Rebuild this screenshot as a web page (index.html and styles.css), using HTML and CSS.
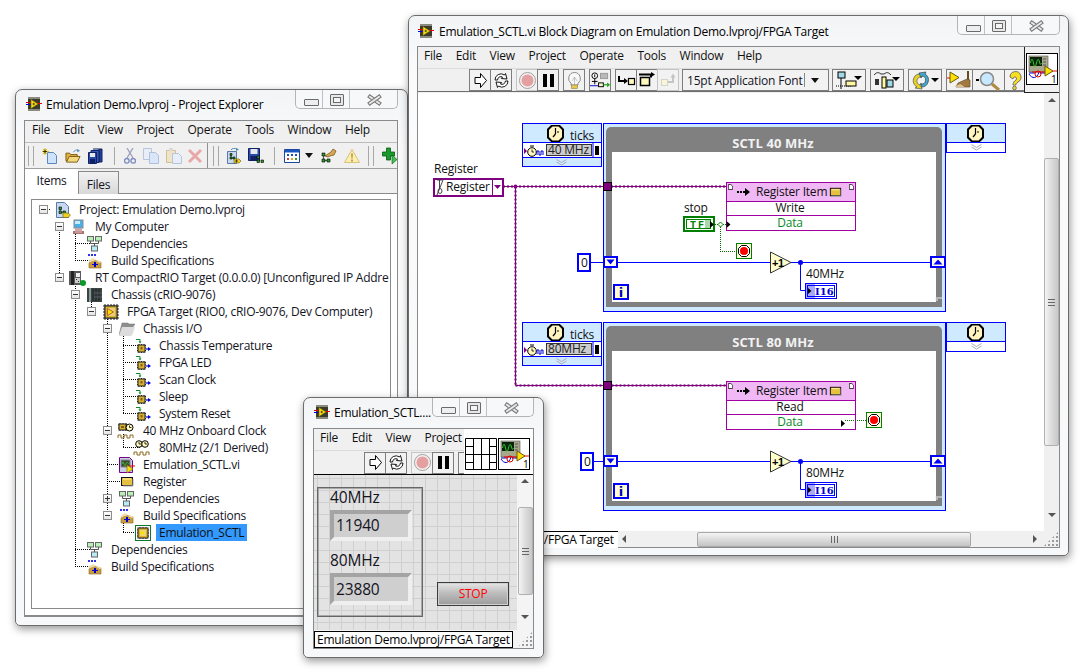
FILE: index.html
```html
<!DOCTYPE html>
<html lang="en">
<head>
<meta charset="utf-8">
<title>Emulation Demo</title>
<link rel="stylesheet" href="styles.css">
</head>
<body>
<svg class="defs" aria-hidden="true">
  <symbol id="vi" viewBox="0 0 16 16">
    <rect x="2" y="1" width="12" height="14" fill="#3b3b2c"/>
    <path d="M2 1h12v2H2zM2 13h12v2H2z" fill="#8a8a80"/>
    <path d="M0 6.500h5" stroke="#d00" fill="none"/><path d="M0 8.500h5" stroke="#00d" fill="none"/>
    <path d="M11 7.500h5" stroke="#e00" fill="none"/>
    <path d="M5 3.500l7 4.500-7 4.500z" fill="#ffe000" stroke="#6a6a20" stroke-width=".6"/>
    <path d="M6.500 8h2.500M7.700 6.800v2.400" stroke="#333" stroke-width=".8"/>
  </symbol>
  <symbol id="viicon" viewBox="0 0 32 32">
    <rect x=".5" y=".5" width="31" height="31" fill="#fff" stroke="#000"/>
    <rect x="3" y="3" width="19" height="16" fill="#a8a88c" stroke="#555" stroke-width=".6"/>
    <rect x="4" y="4" width="12" height="9" fill="#0a220a"/>
    <path d="M4.500 10c1-5 2-5 3 0s2 4 3 0 2-5 3-1 1 2 2 1" stroke="#3c3" fill="none"/>
    <path d="M17 6h3M17 9h3M17 12h3" stroke="#555"/>
    <path d="M3 20h6M14 20h8" stroke="#00c" fill="none"/>
    <path d="M3 21c3 5 8 5 10-2" stroke="#00c" fill="none"/>
    <circle cx="12" cy="21" r="3" fill="none" stroke="#d00"/>
    <path d="M6 19h16M26 18h5" stroke="#e00"/>
    <path d="M19 13l8 5-8 5z" fill="#ffe000" stroke="#665a10"/>
  </symbol>
  <symbol id="conn" viewBox="0 0 32 32">
    <path d="M.5.500h31v31H.5zM8.500 0v32M16.500 0v32M24.500 0v32M0 8.500h8M0 16.500h8M0 24.500h8M24 8.500h8M24 16.500h8M24 24.500h8M8 16.500h16" fill="#fff" stroke="#000"/>
  </symbol>
  <symbol id="run" viewBox="0 0 19 19"><path d="M4 6.500h5.500V2.500l6 7-6 7v-4H4z" fill="#fff" stroke="#000"/></symbol>
  <symbol id="runc" viewBox="0 0 19 19"><path d="M3 9a6 6 0 0 1 9.500-5l1-1.500 1.500 5.500-5.500-.5 1-1.500a3.500 3.500 0 0 0-5 3z" fill="#fff" stroke="#000" stroke-width=".9"/><path d="M16 10a6 6 0 0 1-9.500 5l-1 1.500-1.500-5.500 5.500.5-1 1.500a3.500 3.500 0 0 0 5-3z" fill="#fff" stroke="#000" stroke-width=".9"/></symbol>
  <symbol id="abort" viewBox="0 0 19 19"><circle cx="9.500" cy="9.500" r="8" fill="#f6f0f0" stroke="#a0a0a0"/><circle cx="9.500" cy="9.500" r="6" fill="#e4a0a0"/></symbol>
  <symbol id="pause" viewBox="0 0 19 19"><path d="M4 3h4v13H4zM11 3h4v13h-4z" fill="#000"/></symbol>
  <symbol id="bulb" viewBox="0 0 19 19"><path d="M9.500 1.500a6 6 0 0 1 3.500 10.800v1.700H6v-1.700A6 6 0 0 1 9.500 1.500z" fill="#f8f8f8" stroke="#8a8a8a"/><path d="M7 10l2.500-4 2.500 4M9.500 6v8" fill="none" stroke="#b0b0b0" stroke-width=".7"/><rect x="6.500" y="14" width="6" height="3.500" fill="#e8c850" stroke="#8a8040" stroke-width=".6"/></symbol>
  <symbol id="retain" viewBox="0 0 21 19"><circle cx="5" cy="4.500" r="3" fill="#fff" stroke="#000"/><path d="M5 3v3M5 7.500v6M2 10.500h6" stroke="#000" fill="none"/><rect x="11" y="2" width="7.500" height="5.500" fill="#b8b8b8" stroke="#999"/><rect x="9" y="12" width="5" height="4" fill="#fff8c0" stroke="#000"/><path d="M0 15h9" stroke="#00c"/><path d="M14 14h4" stroke="#080"/><path d="M18 11.500l3 2.500-3 2.500z" fill="#0a0"/></symbol>
  <symbol id="stepin" viewBox="0 0 19 19"><path d="M2 5v5h6" fill="none" stroke="#000" stroke-width="2"/><path d="M7 7l4 3-4 3z" fill="#000"/><rect x="11.500" y="7.500" width="6" height="6" fill="#fff8c0" stroke="#000" stroke-width="1.200"/></symbol>
  <symbol id="stepover" viewBox="0 0 19 19"><rect x="2.500" y="6.500" width="9" height="8" fill="#fff8c0" stroke="#000" stroke-width="1.500"/><path d="M1 3.500h12v3" fill="none" stroke="#000" stroke-width="2"/><path d="M13 1l4 2.500-4 2.500z" fill="#000"/></symbol>
  <symbol id="stepout" viewBox="0 0 19 19" opacity=".5"><rect x="2.500" y="8.500" width="6" height="6" fill="#fff8c0" stroke="#b8b8a0"/><path d="M9 11h5V6" fill="none" stroke="#999" stroke-width="2"/><path d="M11.500 6.500l2.500-4 2.500 4z" fill="#999"/></symbol>
  <symbol id="align" viewBox="0 0 28 21"><rect x="3" y="2" width="7" height="6" fill="#a0d8e8" stroke="#000"/><path d="M1 16h15" stroke="#000" stroke-dasharray="1 1"/><path d="M6 8v11" stroke="#000"/><rect x="11" y="11" width="10" height="5" fill="#fff8a0" stroke="#000"/><path d="M22 6h8l-4 4z" transform="translate(-3 0)" fill="#000"/></symbol>
  <symbol id="dist" viewBox="0 0 28 21"><path d="M1 5c3-3 4-3 7-1h3c3-2 4-2 7 1" fill="none" stroke="#000" stroke-width=".8"/><rect x="2" y="9" width="4" height="6" fill="#333"/><rect x="9" y="7" width="4" height="11" fill="#fff8a0" stroke="#000"/><rect x="14" y="10" width="6" height="7" fill="#a0d8e8" stroke="#000"/><path d="M20 7h8l-4 4z" fill="#000" transform="translate(-1 0)"/></symbol>
  <symbol id="reorder" viewBox="0 0 28 21"><path d="M11 4A7 7 0 0 0 6 17l-2 1 7 1-1-6-1 2a4 4 0 0 1 2-8z" fill="#e8d020" stroke="#555" stroke-width=".7"/><path d="M10 17a7 7 0 0 0 4-13l1-2-7 1 2 5 1-2a4 4 0 0 1-1 8z" fill="#40a8c8" stroke="#345" stroke-width=".7"/><path d="M21 8h8l-4 4z" fill="#000" transform="translate(-1 0)"/></symbol>
  <symbol id="clean" viewBox="0 0 25 21"><path d="M0 8h6" stroke="#e00"/><path d="M3 2l9 5.500-9 5.500z" fill="#ffe000" stroke="#665a10"/><path d="M21 1v9" stroke="#6a4a20" stroke-width="2"/><path d="M11 13l9-4 3 1v7H9z" fill="#a07840" stroke="#5a4020" stroke-width=".6"/><path d="M7 17l6-3 5 3z" fill="#e0c090"/></symbol>
  <symbol id="find" viewBox="0 0 31 21"><path d="M3 10h3" stroke="#000" stroke-width="2"/><circle cx="14" cy="9" r="6.500" fill="#c8e8ff" stroke="#888" stroke-width="1.500"/><path d="M19 14l7 6" stroke="#b08a40" stroke-width="3"/></symbol>
  <symbol id="help" viewBox="0 0 21 21"><path d="M5 7a5.500 5.500 0 1 1 8 5c-2 1-2 2-2 3H8c0-2 1-4 3-5 1.200-1 .5-3-1-3-1 0-2 .5-2 2z" fill="#f8e020" stroke="#555" stroke-width=".8"/><circle cx="9.500" cy="18" r="1.800" fill="#f8e020" stroke="#555" stroke-width=".8"/></symbol>

  <symbol id="new" viewBox="0 0 16 16"><path d="M5.500 4.500h6l3 3v8h-9z" fill="#cfe4fa" stroke="#5a88c0"/><path d="M3 0v7M0 3.500h7M1 1l4 5M5 1L1 6" stroke="#e0c000"/><path d="M3 1.500v4M1 3.500h4" stroke="#000" stroke-width=".7"/></symbol>
  <symbol id="open" viewBox="0 0 17 16"><path d="M1 13V5h4l1 1.500h7V13z" fill="#e0b040" stroke="#7a5a10"/><path d="M1.500 14.500l3-6h11.500l-3 6z" fill="#f4d880" stroke="#7a5a10"/><path d="M9 4c1-2 3-3 5-2" stroke="#4a8ac0" fill="none"/><path d="M13 .5l3 2-3 1.500z" fill="#4a8ac0"/></symbol>
  <symbol id="saveall" viewBox="0 0 16 16"><path d="M5 1h9v13h-3V1" fill="#2040a0" stroke="#102060"/><path d="M3 2.500h8v12H3z" fill="#3a58b8" stroke="#102060"/><path d="M.5 4.500h8v11h-8z" fill="#2a48a8" stroke="#102060"/><rect x="2" y="5" width="5" height="4" fill="#e8e8f0"/><rect x="2" y="11" width="5" height="4" fill="#102060"/></symbol>
  <symbol id="cut" viewBox="0 0 12 16"><path d="M3 0l6 10M9 0L3 10" stroke="#a0a0c0" stroke-width="1.400"/><circle cx="2.800" cy="12.800" r="2.300" fill="none" stroke="#8090c0" stroke-width="1.400"/><circle cx="9.200" cy="12.800" r="2.300" fill="none" stroke="#8090c0" stroke-width="1.400"/></symbol>
  <symbol id="copy" viewBox="0 0 16 16"><path d="M.5.500h8v11h-8z" fill="#e8eef8" stroke="#b8c4dc"/><path d="M6.500 4.500h6l3 3v8h-9z" fill="#d8e6f8" stroke="#b0c0dc"/></symbol>
  <symbol id="paste" viewBox="0 0 16 16"><path d="M.5 2.500h9v12h-9z" fill="#f0e4c8" stroke="#d0c098"/><rect x="3" y="0" width="4" height="3" fill="#d8d8d8"/><path d="M6.500 5.500h6l3 3v7h-9z" fill="#e8eef8" stroke="#b8c4dc"/></symbol>
  <symbol id="del" viewBox="0 0 14 14"><path d="M1 1l12 12M13 1L1 13" stroke="#e8a8a8" stroke-width="3"/></symbol>
  <symbol id="projadd" viewBox="0 0 16 16"><path d="M2.500 3.500h9v12h-9z" fill="#c8d8f0" stroke="#5a78a8"/><path d="M5 5.500h2v2H5zM5 9h2v2H5zM8 9h2v2H8z" fill="#2a9a2a" stroke="#000" stroke-width=".6"/><path d="M6 7.500V9M7 10h1" stroke="#000" stroke-width=".6"/><path d="M6 2c1-2 4-2 6-1" stroke="#4a8ac0" fill="none"/><path d="M11 0l3 1.500-3 1.500z" fill="#4a8ac0"/><path d="M9 11h5l2 2-2 2H9z" fill="#f0d020" stroke="#665a10" stroke-width=".6"/><path d="M10 13h3M11.500 11.500v3" stroke="#000" stroke-width=".6"/></symbol>
  <symbol id="projsave" viewBox="0 0 16 16"><path d="M.5.500h11v12h-11z" fill="#2a48a8" stroke="#102060"/><rect x="2.500" y="1" width="7" height="5" fill="#e8e8f0"/><rect x="2.500" y="8" width="7" height="4" fill="#102060"/><path d="M9 8h2.500v2.500H9zM9 12h2.500v2.500H9zM13 12h2.500v2.500H13z" fill="#2a9a2a" stroke="#000" stroke-width=".6"/></symbol>
  <symbol id="cal" viewBox="0 0 16 16"><path d="M.5 1.500h15v13H.5z" fill="#fff" stroke="#1a48a0"/><rect x="1" y="2" width="14" height="2.500" fill="#1a58c0"/><path d="M3 6h2v2H3zM7 6h2v2H7zM11 6h2v2h-2z" fill="#2050c0"/><path d="M3 10h2v2H3z" fill="#c04040"/><path d="M7 10h2v2H7z" fill="#e0a020"/><path d="M11 10h2v2h-2z" fill="#30a030"/></symbol>
  <symbol id="tool" viewBox="0 0 17 16"><path d="M2 5h3v3H2zM2 11h3v3H2zM7 11h3v3H7z" fill="#2a9a2a" stroke="#000" stroke-width=".6"/><path d="M3.500 8v3M5 12.500h2" stroke="#000" stroke-width=".6"/><path d="M5 8l6-4 2-3 3 2-2 4-4 1-2 1z" fill="#d8a850" stroke="#6a4a10" stroke-width=".7"/></symbol>
  <symbol id="warn" viewBox="0 0 16 15"><path d="M8 1l7.500 13H.5z" fill="#fbeeb0" stroke="#d8c078"/><path d="M7 5h2l-.4 5H7.400zM7 11h2v2H7z" fill="#c0a040"/></symbol>
  <symbol id="plus" viewBox="0 0 16 18"><path d="M4.500 1h4v4h4v4h-4v4h-4V9h-4V5h4z" fill="#1a9a2a" stroke="#0a5a14" stroke-width=".8"/><path d="M10 8l5 4.500-5 4.500z" fill="#40c050" stroke="#0a5a14" stroke-width=".6"/></symbol>

  <symbol id="t-proj" viewBox="0 0 16 16"><path d="M1.500.500h8l4 4v11h-12z" fill="#c8d8f0" stroke="#5a78a8"/><path d="M4 5h2.500v2.500H4zM4 9h2.500v2.500H4zM8 9h2.500v2.500H8z" fill="#2a9a2a" stroke="#000" stroke-width=".6"/><path d="M5.200 7.500V9M6.500 10.200H8" stroke="#000" stroke-width=".6"/><path d="M8 11h5l2.500 2.200-2.500 2.300H8z" fill="#f0d020" stroke="#665a10" stroke-width=".6"/></symbol>
  <symbol id="t-pc" viewBox="0 0 16 16"><rect x="3" y="1" width="9" height="8" fill="#48b0e8" stroke="#8a8a8a"/><rect x="4" y="2" width="5" height="3" fill="#c8ecff"/><path d="M4 9h7v3H4z" fill="#c8a8a8"/><path d="M2 12h11v3H2z" fill="#b07070"/><path d="M4 13h7" stroke="#fff" stroke-width=".6"/></symbol>
  <symbol id="t-dep" viewBox="0 0 16 16"><rect x=".5" y=".5" width="6" height="4.500" fill="#b8f0b8" stroke="#666"/><rect x="8.500" y=".5" width="6" height="4.500" fill="#b8f0b8" stroke="#666"/><path d="M3.500 5v2.500h8V5M7.500 7.500V10" stroke="#555" fill="none"/><rect x="4.500" y="10" width="6" height="5" fill="#b8ecf8" stroke="#666"/></symbol>
  <symbol id="t-build" viewBox="0 0 16 16"><circle cx="2" cy="2" r="1.100" fill="#00d"/><circle cx="5" cy="2" r="1.100" fill="#00d"/><circle cx="8" cy="2" r="1.100" fill="#00d"/><path d="M2 10l5-3 7 2v6H2z" fill="#cc9c40" stroke="#8a6820" stroke-width=".6"/><path d="M1 8l5-3 3 2-6 2zM10 7l5 2-2 1-4-2z" fill="#f0e0b0"/><path d="M7 9h2v2h2v1H9v2H7v-2H5v-1h2z" fill="#00c"/></symbol>
  <symbol id="t-rt" viewBox="0 0 18 16"><rect x="0" y="1" width="12" height="14" fill="#5a5a5a"/><rect x="2" y="1" width="3" height="14" fill="#222"/><rect x="7" y="3" width="4" height="4" fill="#eee"/><rect x="6" y="8" width="5" height="5" fill="#ccc"/><path d="M7 9h1v1H7zM9 11h1v1H9z" fill="#333"/><circle cx="14" cy="13" r="3" fill="#0a9a2a"/></symbol>
  <symbol id="t-chassis" viewBox="0 0 16 16"><rect x="0" y="1" width="15" height="14" fill="#3c4444"/><path d="M3 1v14" stroke="#8a9a9a" stroke-width="2"/><path d="M6 2v12M9 2v12M12 2v12" stroke="#1a2020"/><path d="M7 6h8M7 10h8" stroke="#667" stroke-width=".8"/></symbol>
  <symbol id="t-fpga" viewBox="0 0 16 16"><path d="M2 0v16M5 0v16M8 0v16M11 0v16M14 0v16M0 2h16M0 5h16M0 8h16M0 11h16M0 14h16" stroke="#222" stroke-width="1"/><rect x="2" y="2" width="12" height="12" fill="#d8b030" stroke="#222"/><rect x="4" y="4" width="8" height="8" fill="#e8d080"/><path d="M4.500 4.500l6 3.500-6 3.500z" fill="#ffe000" stroke="#a03020" stroke-width=".7"/></symbol>
  <symbol id="t-folder" viewBox="0 0 16 16"><path d="M0 14L3 2h6l1 1h6l-2 3-2 8z" fill="#8e8e8e" stroke="#777" stroke-width=".5"/><path d="M0 14.500l3-8.500h13l-3 8.500z" fill="#dcdcdc"/></symbol>
  <symbol id="t-io" viewBox="0 0 16 16"><path d="M1 1.500h4V4" fill="none" stroke="#0a8a2a"/><path d="M3.500 3.500h3L5 5.500z" fill="#0a8a2a"/><path d="M4 6v9M6.500 6v9M9 6v9M2 7.500h9M2 10h9M2 12.500h9" stroke="#222"/><rect x="3" y="7" width="7" height="7" fill="#d8b030" stroke="#222"/><rect x="5.500" y="9" width="2" height="2.500" fill="#806020"/><path d="M11 11h3" stroke="#00d" stroke-width="1.200"/><path d="M13 9l3 2-3 2z" fill="#00d"/></symbol>
  <symbol id="t-clock" viewBox="0 0 18 16"><path d="M3 0v8M6 0v8M9 0v8M1 2h9M1 5h9" stroke="#222"/><rect x="2" y="1" width="7" height="6" fill="#d8b030" stroke="#222"/><rect x="4" y="3" width="3" height="2" fill="#806020"/><circle cx="12.500" cy="4.500" r="3.500" fill="#fff8c0" stroke="#000"/><path d="M12.500 2.500v2h2" stroke="#000" fill="none" stroke-width=".8"/><path d="M1 15v-3h3v3h3v-3h3v3h3v-3h3v3" stroke="#8a6a20" fill="none"/></symbol>
  <symbol id="t-derived" viewBox="0 0 18 16"><circle cx="6" cy="4" r="3.300" fill="#fff8c0" stroke="#000"/><circle cx="12" cy="4" r="3.300" fill="#fff8c0" stroke="#000"/><path d="M6 2v2h2M12 2v2h2" stroke="#000" fill="none" stroke-width=".8"/><path d="M1 15v-3h3v3h3v-3h3v3h3v-3h3v3" stroke="#8a6a20" fill="none"/></symbol>
  <symbol id="t-vi" viewBox="0 0 16 16"><path d="M.5.500h10l3 3v12H.5z" fill="#c8d0e8" stroke="#708"/><rect x="2" y="3" width="9" height="7" fill="#3c4a30" stroke="#889"/><path d="M3 7c1-3 1-3 2 0s2 2 2 0 2-2 3 0" stroke="#4c4" fill="none" stroke-width=".8"/><path d="M10 9h6" stroke="#e00"/><path d="M8 8l6 4-6 4z" fill="#ffe000" stroke="#665a10" stroke-width=".6"/></symbol>
  <symbol id="t-reg" viewBox="0 0 16 16"><rect x="2.500" y="3.500" width="11" height="8" fill="#e8c040" stroke="#111"/><path d="M4 5h8" stroke="#fff4a0"/><path d="M14 5v7H4" stroke="#aaa" fill="none"/></symbol>
  <symbol id="t-bit" viewBox="0 0 16 16"><rect x=".5" y=".5" width="15" height="15" fill="#fff" stroke="#0a7a2a"/><path d="M5 2v12M8 2v12M11 2v12M2 5h12M2 8h12M2 11h12" stroke="#222"/><rect x="3" y="3" width="10" height="10" fill="#d8b030" stroke="#222"/><rect x="5" y="5" width="6" height="6" fill="#e8d880"/><path d="M5.500 5.500l5 2.500-5 2.500z" fill="#ffe000"/></symbol>

  <symbol id="clk" viewBox="0 0 17 17"><path d="M5 .5h7l4 4v8l-4 4H5l-4-4v-8z" fill="#fff4c0" stroke="#000" stroke-width="2"/><path d="M8.500 3v6M8.500 9L6 12" stroke="#000" stroke-width="1.200"/><path d="M11 6v2" stroke="#000"/></symbol>
  <symbol id="clkwave" viewBox="0 0 20 12"><path d="M0 3l3 3-3 3z" fill="#800080"/><circle cx="8" cy="7" r="4.300" fill="#fff8c0" stroke="#000"/><path d="M6 1h4" stroke="#000"/><path d="M8 4.500V7h2" stroke="#000" fill="none" stroke-width=".8"/><path d="M13 10V6h2v4h2V6h2v4" stroke="#00c" fill="none"/></symbol>
  <symbol id="chev" viewBox="0 0 11 7"><path d="M.5 .5l5 3 5-3M.5 3l5 3 5-3" stroke="#aab" fill="none"/></symbol>
  <symbol id="doc" viewBox="0 0 7 8"><path d="M.5.500h3.500l2.500 2.500v4.500h-6z" fill="#fff" stroke="#000"/></symbol>
  <symbol id="regarrow" viewBox="0 0 13 11"><path d="M0 4h2v2H0zM3 4h2v2H3z" fill="#000"/><path d="M6 4h2V1l5 4-5 4V6H6z" fill="#000"/></symbol>
  <symbol id="stopt" viewBox="0 0 16 16"><rect x=".5" y=".5" width="15" height="15" fill="#fff8d8" stroke="#008000"/><path d="M5.500 2.500h5l3 3v5l-3 3h-5l-3-3v-5z" fill="#fff" stroke="#000"/><circle cx="8" cy="8" r="4" fill="#f00"/></symbol>
</svg>

<section class="win win-proj">
  <header class="titlebar"><svg class="ic16"><use href="#vi"/></svg><span class="titletext">Emulation Demo.lvproj - Project Explorer</span></header>
  <div class="caps cap-proj"><i class="cap cap-min"></i><i class="cap cap-max"></i><i class="cap cap-close"></i></div>
  <div class="client">
    <nav class="menubar menu-proj"><span>File</span><span>Edit</span><span>View</span><span>Project</span><span>Operate</span><span>Tools</span><span>Window</span><span>Help</span></nav>
    <div class="ptools">
      <i class="grip"></i>
      <svg class="pt pt-new"><use href="#new"/></svg>
      <svg class="pt pt-o"><use href="#open"/></svg>
      <svg class="pt"><use href="#saveall"/></svg>
      <i class="psep"></i>
      <svg class="pt pt-cut"><use href="#cut"/></svg>
      <svg class="pt"><use href="#copy"/></svg>
      <svg class="pt"><use href="#paste"/></svg>
      <svg class="pt pt-del"><use href="#del"/></svg>
      <i class="pdiv"></i>
      <i class="grip grip2"></i>
      <svg class="pt pt-add"><use href="#projadd"/></svg>
      <svg class="pt pt-s"><use href="#projsave"/></svg>
      <i class="psep"></i>
      <svg class="pt pt-cal"><use href="#cal"/></svg>
      <i class="tri"></i>
      <svg class="pt pt-tool"><use href="#tool"/></svg>
      <svg class="pt pt-warn"><use href="#warn"/></svg>
      <i class="grip grip3"></i>
      <svg class="pt pt-plus"><use href="#plus"/></svg>
    </div>
    <div class="tabs"><span class="tab tab-on">Items</span><span class="tab tab-off">Files</span></div>
    <div class="tabpanel">
      <div class="tree">
        <svg class="treelines" width="358" height="408" viewBox="32 201 358 408">
          <path d="M59 231V278M75 231V261M75 278.500V567M91 299V312M107 316V516M123 333V414M123 435V448M123 520V533M43 210H50M59 227H65M59 278H65M75 244H90M75 261H90M75 295H81M91 312H97M107 329H113M123 346H140M123 363H140M123 380H140M123 397H140M123 414H140M107 431H113M123 448H140M107 465H120M107 482H120M107 499H113M107 516H113M123 533H135M75 550H90M75 567H90"/>
        </svg>
        <div class="row"><i class="exp"></i><svg class="ti"><use href="#t-proj"/></svg><span>Project: Emulation Demo.lvproj</span></div>
        <div class="row d1"><i class="exp"></i><svg class="ti"><use href="#t-pc"/></svg><span>My Computer</span></div>
        <div class="row d2"><i class="noexp"></i><svg class="ti"><use href="#t-dep"/></svg><span>Dependencies</span></div>
        <div class="row d2"><i class="noexp"></i><svg class="ti"><use href="#t-build"/></svg><span>Build Specifications</span></div>
        <div class="row d1"><i class="exp"></i><svg class="ti ti-w"><use href="#t-rt"/></svg><span>RT CompactRIO Target (0.0.0.0) [Unconfigured IP Addre</span></div>
        <div class="row d2"><i class="exp"></i><svg class="ti"><use href="#t-chassis"/></svg><span>Chassis (cRIO-9076)</span></div>
        <div class="row d3"><i class="exp"></i><svg class="ti"><use href="#t-fpga"/></svg><span>FPGA Target (RIO0, cRIO-9076, Dev Computer)</span></div>
        <div class="row d4"><i class="exp"></i><svg class="ti"><use href="#t-folder"/></svg><span>Chassis I/O</span></div>
        <div class="row d5"><i class="noexp"></i><svg class="ti"><use href="#t-io"/></svg><span>Chassis Temperature</span></div>
        <div class="row d5"><i class="noexp"></i><svg class="ti"><use href="#t-io"/></svg><span>FPGA LED</span></div>
        <div class="row d5"><i class="noexp"></i><svg class="ti"><use href="#t-io"/></svg><span>Scan Clock</span></div>
        <div class="row d5"><i class="noexp"></i><svg class="ti"><use href="#t-io"/></svg><span>Sleep</span></div>
        <div class="row d5"><i class="noexp"></i><svg class="ti"><use href="#t-io"/></svg><span>System Reset</span></div>
        <div class="row d4"><i class="exp"></i><svg class="ti ti-w"><use href="#t-clock"/></svg><span>40 MHz Onboard Clock</span></div>
        <div class="row d5"><i class="noexp"></i><svg class="ti ti-w"><use href="#t-derived"/></svg><span>80MHz (2/1 Derived)</span></div>
        <div class="row d4"><i class="noexp"></i><svg class="ti"><use href="#t-vi"/></svg><span>Emulation_SCTL.vi</span></div>
        <div class="row d4"><i class="noexp"></i><svg class="ti"><use href="#t-reg"/></svg><span>Register</span></div>
        <div class="row d4"><i class="exp exp-plus"></i><svg class="ti"><use href="#t-dep"/></svg><span>Dependencies</span></div>
        <div class="row d4"><i class="exp"></i><svg class="ti"><use href="#t-build"/></svg><span>Build Specifications</span></div>
        <div class="row d5"><i class="noexp"></i><svg class="ti"><use href="#t-bit"/></svg><span class="sel">Emulation_SCTL</span></div>
        <div class="row d2"><i class="noexp"></i><svg class="ti"><use href="#t-dep"/></svg><span>Dependencies</span></div>
        <div class="row d2"><i class="noexp"></i><svg class="ti"><use href="#t-build"/></svg><span>Build Specifications</span></div>
      </div>
    </div>
  </div>
</section>

<section class="win win-bd">
  <header class="titlebar"><svg class="ic16"><use href="#vi"/></svg><span class="titletext">Emulation_SCTL.vi Block Diagram on Emulation Demo.lvproj/FPGA Target</span></header>
  <div class="caps cap-bd"><i class="cap cap-min"></i><i class="cap cap-max"></i><i class="cap cap-close"></i></div>
  <div class="client">
    <div class="bdhead">
      <div class="bdbars">
        <nav class="menubar menu-bd"><span>File</span><span>Edit</span><span>View</span><span>Project</span><span>Operate</span><span>Tools</span><span>Window</span><span>Help</span></nav>
        <div class="toolbar bd-tools">
          <div class="grp"><b class="btn"><svg class="i19"><use href="#run"/></svg></b><b class="btn"><svg class="i19"><use href="#runc"/></svg></b></div>
          <div class="grp"><b class="btn btn-off"><svg class="i19"><use href="#abort"/></svg></b><b class="btn"><svg class="i19"><use href="#pause"/></svg></b></div>
          <div class="grp"><b class="btn"><svg class="i19"><use href="#bulb"/></svg></b></div>
          <div class="grp"><b class="btn"><svg class="i21"><use href="#retain"/></svg></b></div>
          <div class="grp"><b class="btn"><svg class="i19"><use href="#stepin"/></svg></b><b class="btn"><svg class="i19"><use href="#stepover"/></svg></b><b class="btn btn-off"><svg class="i19"><use href="#stepout"/></svg></b></div>
          <div class="ring"><span>15pt Application Font</span><i class="ringsep"></i><i class="tri tri-s"></i></div>
          <div class="grp g-al"><b class="btn b34"><svg class="i28"><use href="#align"/></svg></b></div>
          <div class="grp g-di"><b class="btn b34"><svg class="i28"><use href="#dist"/></svg></b></div>
          <div class="grp g-re"><b class="btn b34"><svg class="i28"><use href="#reorder"/></svg></b></div>
          <div class="grp g-cl"><b class="btn b27"><svg class="i25"><use href="#clean"/></svg></b><b class="btn b33"><svg class="i31"><use href="#find"/></svg></b><b class="btn b23"><svg class="i21b"><use href="#help"/></svg></b></div>
        </div>
      </div>
      <div class="iconpane"><svg class="i32" viewBox="0 0 32 32"><use href="#viicon"/><text class="iconnum" x="25" y="30">1</text></svg></div>
    </div>
    <div class="bdbody">
      <div class="canvas">
        <svg class="diagram" width="626" height="438" viewBox="418 93 626 438">
          <defs>
            <g id="frame">
              <rect x="603.500" y="123.500" width="342" height="188" fill="#cfe9ff" stroke="#0000ff"/>
              <path d="M611 127h326a5 5 0 0 1 5 5v175H606V132a5 5 0 0 1 5-5z" fill="#808080"/>
              <rect x="612" y="152" width="324" height="150" fill="#fff"/>
              <path d="M935 298h7M935 300h3" stroke="#e8e8e8"/>
            </g>
            <g id="leftnode">
              <rect x="522.500" y="123.500" width="79" height="43" fill="#cfe9ff" stroke="#0000ff"/>
              <rect x="522.500" y="142.500" width="79" height="15" fill="#fff" stroke="#0000ff"/>
              <use href="#clk" x="547" y="125" width="17" height="17"/>
              <use href="#clkwave" x="524" y="145" width="20" height="12"/>
              <rect x="546.500" y="144.500" width="45" height="11" fill="#ccc" stroke="#333"/>
              <path d="M593 143v14" stroke="#00f"/>
              <rect x="595" y="146" width="4" height="9" fill="#000"/>
              <use href="#chev" x="556" y="159" width="11" height="7"/>
            </g>
            <g id="rightnode">
              <rect x="946.500" y="123.500" width="59" height="29" fill="#fff" stroke="#0000ff"/>
              <rect x="947" y="124" width="58" height="18" fill="#cfe9ff"/>
              <path d="M947 142.500h58" stroke="#00f"/>
              <use href="#clk" x="967" y="125" width="17" height="17"/>
              <use href="#chev" x="971" y="144" width="11" height="7"/>
            </g>
            <g id="sr">
              <rect x="578" y="254" width="12" height="17" fill="#fff" stroke="#0000ff" stroke-width="2"/>
              <path d="M590 262.500h13" stroke="#00f"/>
            </g>
            <g id="common">
              <path d="M618 262.500h152M791 262.500h139M800.500 262.500V290.500h5" stroke="#0000ff" fill="none"/>
              <circle cx="800.500" cy="262.500" r="2.500" fill="#00f"/>
              <rect x="604" y="257" width="13" height="10" fill="#fffde8" stroke="#0000ff" stroke-width="2"/>
              <path d="M606.500 259.500h8l-4 5z" fill="#00f"/>
              <rect x="931" y="257" width="14" height="10" fill="#fffde8" stroke="#0000ff" stroke-width="2"/>
              <path d="M933.500 264.500h9l-4.500-5z" fill="#00f"/>
              <path d="M770.500 252l20.500 10.500-20.500 10.500z" fill="#ffffcc" stroke="#333"/>
              <rect x="805.500" y="283.500" width="31" height="15" fill="#fff" stroke="#0000ff"/>
              <rect x="806" y="284" width="9" height="14" fill="#a8a8ff"/>
              <path d="M808 288l3.500 3-3.500 3z" fill="#000"/>
              <rect x="807.500" y="285.500" width="27" height="11" fill="none" stroke="#00f"/>
              <rect x="614" y="285" width="14" height="14" fill="#ffffcc" stroke="#0000ff" stroke-width="2"/>
            </g>
            <g id="regnode">
              <rect x="726.500" y="182.500" width="129" height="48" fill="#fff" stroke="#a000a0"/>
              <rect x="727" y="183" width="128" height="18" fill="#f0b8f4"/>
              <path d="M726.500 201.500h129M726.500 215.500h129" stroke="#a000a0"/>
              <use href="#doc" x="728" y="184" width="5" height="6"/>
              <use href="#doc" x="849" y="184" width="5" height="6"/>
              <use href="#regarrow" x="737" y="187" width="13" height="11"/>
              <use href="#t-reg" x="828" y="185" width="15" height="15"/>
            </g>
          </defs>
          <use href="#frame"/>
          <use href="#frame" y="199"/>
          <use href="#leftnode"/>
          <use href="#leftnode" y="199"/>
          <use href="#rightnode"/>
          <use href="#rightnode" y="199"/>
          <use href="#sr"/>
          <use href="#sr" x="3" y="199"/>
          <use href="#common"/>
          <use href="#common" y="199"/>
          <path class="wire" d="M503 186.500H726M515.500 186.500V385.500M515.500 385.500H726"/>
          <path class="wire2" d="M503 186.500H726M515.500 186.500V385.500M515.500 385.500H726"/>
          <circle cx="515.500" cy="186.500" r="2" fill="#800080"/>
          <rect x="603.500" y="182.500" width="8" height="8" fill="#800080" stroke="#000"/>
          <rect x="603.500" y="381.500" width="8" height="8" fill="#800080" stroke="#000"/>
          <use href="#regnode"/>
          <use href="#regnode" y="199"/>

          <rect x="434" y="179" width="69" height="17" fill="#fff" stroke="#800080" stroke-width="2"/>
          <path d="M492.500 179v17" stroke="#800080"/>
          <path d="M494 185h7l-3.500 4z" fill="#800080"/>
          <path d="M437 180h5M439.500 180v8M438 191a2 2.500 0 1 0 4 0a2 2.500 0 1 0-4 0M443 180l-6 15" stroke="#333" fill="none" stroke-width=".9"/>

          <path class="boolw" d="M715 224.500h11M720.500 224.500V251.500H736"/>
          <path d="M720.500 222l2.500 2.500-2.500 2.500-2.500-2.500z" fill="#fff" stroke="#008000"/>
          <rect x="684" y="217" width="30" height="14" fill="#fff" stroke="#008000" stroke-width="2"/>
          <rect x="686.500" y="219.500" width="24" height="9" fill="#fff" stroke="#008000"/>
          <rect x="705" y="220" width="5" height="8" fill="#a8d8a8"/>
          <path d="M710 221l4 3.500-4 3.500z" fill="#000"/>
          <path d="M726.500 221l4 3.500-4 3.500z" fill="#000"/>
          <use href="#stopt" x="736" y="243" width="16" height="16"/>
          <path d="M841 420l4 3.500-4 3.500z" fill="#000"/>
          <path class="boolw" d="M845 420.500h21"/>
          <use href="#stopt" x="866" y="412" width="16" height="16"/>

          <text class="dg dg-title" x="773" y="148" text-anchor="middle">SCTL 40 MHz</text>
          <text class="dg dg-title" x="773" y="347" text-anchor="middle">SCTL 80 MHz</text>
          <text class="dg" x="570" y="140">ticks</text>
          <text class="dg" x="570" y="339">ticks</text>
          <text class="dg dg-val" x="548" y="154">40 MHz</text>
          <text class="dg dg-val" x="548" y="353">80MHz</text>
          <text class="dg" x="434" y="173">Register</text>
          <text class="dg" x="446" y="191">Register</text>
          <text class="dg" x="756" y="196">Register Item</text>
          <text class="dg" x="756" y="395">Register Item</text>
          <text class="dg" x="790" y="212" text-anchor="middle">Write</text>
          <text class="dg" x="790" y="411" text-anchor="middle">Read</text>
          <text class="dg dg-g" x="790" y="227" text-anchor="middle">Data</text>
          <text class="dg dg-g" x="790" y="426" text-anchor="middle">Data</text>
          <text class="dg" x="684" y="212">stop</text>
          <text class="dg dg-tf" x="690" y="228">TF</text>
          <text class="dg" x="581" y="267">0</text>
          <text class="dg" x="584" y="466">0</text>
          <text class="dg dg-inc" x="772" y="267">+1</text>
          <text class="dg dg-inc" x="772" y="466">+1</text>
          <text class="dg" x="806" y="278">40MHz</text>
          <text class="dg" x="806" y="477">80MHz</text>
          <text class="dg dg-i16" x="815" y="295">I16</text>
          <text class="dg dg-i16" x="815" y="494">I16</text>
          <text class="dg dg-it" x="621" y="297">i</text>
          <text class="dg dg-it" x="621" y="496">i</text>
        </svg>
      </div>
      <div class="vscroll vs-bd"><i class="sb-up"></i><i class="vthumb vt-bd"><i class="ridges"></i></i><i class="sb-down"></i></div>
    </div>
    <div class="bdfoot">
      <div class="pathlabel pl-bd">Emulation Demo.lvproj/FPGA Target</div>
      <div class="hscroll"><i class="sb-left"></i><i class="hthumb"><i class="hridges"></i></i><i class="sb-right"></i></div>
      <i class="sizegrip"></i>
    </div>
  </div>
</section>

<section class="win win-fp">
  <header class="titlebar"><svg class="ic16"><use href="#vi"/></svg><span class="titletext">Emulation_SCTL....</span></header>
  <div class="caps cap-fp"><i class="cap cap-min"></i><i class="cap cap-max"></i><i class="cap cap-close"></i></div>
  <div class="client">
    <div class="fphead">
      <div class="fpbars">
        <nav class="menubar menu-fp"><span>File</span><span>Edit</span><span>View</span><span>Project</span></nav>
        <div class="toolbar fp-tools">
          <div class="grp"><b class="btn"><svg class="i19"><use href="#run"/></svg></b><b class="btn"><svg class="i19"><use href="#runc"/></svg></b></div>
          <div class="grp"><b class="btn btn-off"><svg class="i19"><use href="#abort"/></svg></b><b class="btn"><svg class="i19"><use href="#pause"/></svg></b></div>
          <div class="grp"><b class="btn btn-cut"></b></div>
        </div>
      </div>
      <div class="fpicons">
        <svg class="i32"><use href="#conn"/></svg>
        <svg class="i32" viewBox="0 0 32 32"><use href="#viicon"/><text class="iconnum" x="25" y="30">1</text></svg>
      </div>
    </div>
    <div class="fpbody">
      <div class="fpanel">
        <div class="decor">
          <div class="nlabel">40MHz</div>
          <div class="ind">11940</div>
          <div class="nlabel nl2">80MHz</div>
          <div class="ind ind2">23880</div>
        </div>
        <div class="stopbtn">STOP</div>
      </div>
      <div class="vscroll vs-fp"><i class="sb-up"></i><i class="vthumb vt-fp"><i class="ridges"></i></i><i class="sb-down"></i></div>
    </div>
    <div class="fpfoot">
      <div class="pathlabel pl-fp">Emulation Demo.lvproj/FPGA Target</div>
      <i class="sizegrip"></i>
    </div>
  </div>
</section>
</body>
</html>
```

FILE: styles.css
```css
* { box-sizing: border-box; }
html, body { margin: 0; padding: 0; }
body {
  width: 1083px; height: 671px; overflow: hidden; position: relative;
  background: #fff; color: #14141e;
  font-family: "Open Sans", "Liberation Sans", sans-serif; font-size: 12px;
  letter-spacing: -.26px;
}
.defs { position: absolute; width: 0; height: 0; }
.iconnum { font: 10px "Open Sans", sans-serif; fill: #000; }
i, b { display: block; font-style: normal; }

/* windows on the desktop */
.win {
  position: absolute; display: flex; flex-direction: column;
  background: linear-gradient(#f2f4f6, #fbfbfc 60px, #f7f8f9);
  border: 1px solid #6c6c6c; border-radius: 7px 7px 5px 5px;
  box-shadow: 1px 3px 9px rgba(0,0,0,.42);
}
.win-proj { left: 15px; top: 89px; width: 393px; height: 537px; padding: 0 9px 8px 8px; }
.win-bd { left: 408px; top: 15px; width: 661px; height: 541px; padding: 0 8px 7px 8px; }
.win-fp { left: 303px; top: 397px; width: 241px; height: 261px; padding: 0 9px 8px 9px; }

.titlebar { height: 30px; flex: none; display: flex; align-items: center; gap: 4px; padding: 0 0 0 2px; }
.win-proj .titlebar, .win-fp .titlebar { padding-bottom: 2px; }
.win-bd .titlebar { padding-left: 1px; gap: 5px; }
.win-fp .titlebar { padding-left: 1px; }
.ic16 { width: 16px; height: 16px; flex: none; }
.titletext { white-space: nowrap; color: #000; }

.caps {
  position: absolute; top: 0; height: 19px; display: flex;
  background: #f7f8fa; border: 1px solid #b4b4b4; border-top: 0; border-radius: 0 0 5px 5px;
}
.cap-proj { right: 9px; width: 103px; }
.cap-bd { right: 8px; width: 103px; }
.cap-fp { right: 9px; width: 102px; }
.cap { position: relative; border-right: 1px solid #c0c0c0; width: 27px; }
.cap-close { flex: 1; border-right: 0; }
.cap-min::after { content: ""; position: absolute; left: 8px; top: 9px; width: 13px; height: 5px; border: 1px solid #6a6a6a; background: #eee; border-radius: 1px; }
.cap-max::after { content: ""; position: absolute; left: 7px; top: 4px; width: 12px; height: 10px; border: 1px solid #6a6a6a; background: #f4f4f4; box-shadow: inset 0 0 0 2px #e8e8e8, inset 0 0 0 3px #6a6a6a; border-radius: 1px; }
.cap-close::before, .cap-close::after { content: ""; position: absolute; left: 17px; top: 8px; background: #e8e8e8; border: 1px solid #777; box-sizing: content-box; width: 13px; height: 2px; }
.cap-close::before { transform: rotate(35deg); }
.cap-close::after { transform: rotate(-35deg); }

.client {
  flex: 1; min-height: 0; display: flex; flex-direction: column;
  border: 1px solid #8a8a8a; background: #f0f0f0;
}

/* menus */
.menubar { height: 21px; flex: none; display: flex; align-items: center; color: #111; line-height: 1; padding-bottom: 4px; gap: 13.700px; }
.menubar span { display: block; }
.menu-bd { padding-left: 6px; }
.menu-proj { padding-left: 7px; }
.menu-fp { padding-left: 6px; }

/* toolbars */
.toolbar { display: flex; align-items: center; }
.grp { display: flex; flex: none; }
.toolbar .grp + .grp { margin-left: 1px; }
.btn {
  width: 22px; height: 22px; display: flex; align-items: center; justify-content: center; flex: none;
  border: 1px solid #7d7d7d; background: #f2f2f2; margin-right: -1px;
}
.btn-off { border-color: #c4c4c4; }
.b34 { width: 34px; }
.b27 { width: 27px; }
.b33 { width: 33px; }
.b23 { width: 23px; }
.i19 { width: 19px; height: 19px; }
.i21 { width: 21px; height: 19px; }
.i28 { width: 28px; height: 21px; }
.i25 { width: 25px; height: 21px; }
.i31 { width: 31px; height: 21px; }
.i21b { width: 21px; height: 21px; }
.i32 { width: 32px; height: 32px; display: block; flex: none; }
.bdhead { display: grid; grid-template-columns: 1fr 35px; flex: none; }
.bdbars { min-width: 0; }
.bd-tools {
  height: 24px; border-top: 1px solid #dcdcdc; border-bottom: 1px solid #6e6e6e;
  padding-left: 51px; gap: 4px;
}
.ring {
  width: 147px; height: 22px; flex: none; border: 1px solid #7d7d7d; background: #f2f2f2;
  display: flex; align-items: center; padding-left: 4px; letter-spacing: -.18px; white-space: nowrap;
}
.ring span { flex: 1; }
.ringsep { width: 1px; height: 14px; background: #888; margin-right: 6px; }
.tri { width: 0; height: 0; border: 4px solid transparent; border-top: 5px solid #111; border-bottom: 0; }
.tri-s { margin-right: 9px; }
.toolbar .g-al { margin-left: -1px; }
.toolbar .g-di { margin-left: -1px; }
.toolbar .g-re { margin-left: 2px; }
.toolbar .g-cl { margin-left: -1px; }
.iconpane {
  border-left: 1px solid #222; border-bottom: 1px solid #222;
  display: flex; align-items: center; justify-content: center; padding-bottom: 2px; width: 35px; height: 46px; background-color: #f0f0f0;
}

/* project toolbar */
.ptools {
  height: 27px; flex: none; display: flex; align-items: center;
  border-top: 1px solid #bcbcbc; border-bottom: 1px solid #a0a0a0; padding-left: 3px; overflow: hidden;
}
.grip { width: 6px; height: 20px; flex: none; border-left: 1px solid #a8a8a8; border-right: 1px solid #a8a8a8; }
.pt { width: 16px; height: 16px; flex: none; margin-left: 7px; }
.pt-new { margin-left: 8px; }
.pt-cut { margin-left: 9px; width: 12px; }
.pt-del { width: 14px; margin-left: 6px; }
.pt-add { margin-left: 6px; }
.pt-cal { margin-left: 9px; }
.pt-tool { margin-left: 7px; width: 17px; }
.pt-warn { margin-left: 7px; }
.pt-plus { margin-left: 8px; height: 18px; }
.psep { width: 1px; height: 18px; flex: none; background: #a8a8a8; margin-left: 10px; }
.pdiv { width: 1px; height: 26px; flex: none; background: #909090; margin-left: 5px; }
.grip2 { margin-left: 5px; }
.grip3 { margin-left: 8px; }
.ptools .tri { margin-left: 5px; margin-right: 0; }

/* tabs */
.tabs { height: 25px; flex: none; display: flex; align-items: flex-end; position: relative; }
.tab { display: flex; align-items: center; justify-content: center; }
.tab-on { width: 53px; height: 25px; background: #fff; padding-bottom: 2px; }
.tab-off {
  width: 41px; height: 23px; border: 1px solid #8a8a8a; border-bottom: 0;
  background: linear-gradient(#f2f2f2, #d8d8d8); padding-top: 2px;
}
.tabs::after { content: ""; flex: 1; border-bottom: 1px solid #8a8a8a; }
.tabpanel { flex: 1; min-height: 0; background: #fff; padding: 5px 6px 6px 6px; border-bottom: 1px solid #8a8a8a; }
.tree {
  position: relative; height: 100%; overflow: hidden; background: #fff; border: 1px solid #8a8a8a;
  padding-top: 1px;
}
.treelines { position: absolute; left: 0; top: 0; }
.treelines path { fill: none; stroke: #000; stroke-dasharray: 1 1; shape-rendering: crispEdges; }
.row { height: 17px; display: flex; align-items: center; white-space: nowrap; padding-left: 7px; position: relative; }
.d1 { padding-left: 23px; }
.d2 { padding-left: 39px; }
.d3 { padding-left: 55px; }
.d4 { padding-left: 71px; }
.d5 { padding-left: 87px; }
.exp, .noexp { width: 9px; height: 9px; flex: none; margin-right: 7px; }
.exp { position: relative; border: 1px solid #8c8c8c; background: linear-gradient(#fff, #e4e4e4); }
.exp::after { content: ""; position: absolute; left: 1px; top: 3px; width: 5px; height: 1px; background: #333; }
.exp-plus::before { content: ""; position: absolute; left: 3px; top: 1px; width: 1px; height: 5px; background: #333; }
.ti { width: 16px; height: 16px; flex: none; margin-right: 8px; }
.ti-w { width: 18px; margin-left: -2px; }
.row span { display: block; line-height: 17px; }
.row .sel { background: #3399ff; margin-left: -3px; padding: 0 3px; color: #111; }

/* block diagram */
.bdbody { flex: 1; min-height: 0; display: flex; background: #fff; }
.canvas { width: 626px; position: relative; overflow: hidden; flex: none; }
.diagram { display: block; }
.dg { font: 12px "Open Sans", sans-serif; letter-spacing: -.2px; fill: #111; }
.dg-title { font-weight: 700; font-size: 13px; fill: #f2f2f2; letter-spacing: .1px; }
.dg-val { fill: #222; }
.dg-g { fill: #0a8a2a; }
.dg-tf { font: 700 10px "Liberation Mono", monospace; letter-spacing: 2px; fill: #008000; }
.dg-inc { font: 700 11px "Liberation Sans", sans-serif; fill: #000; letter-spacing: -.5px; }
.dg-i16 { font: 700 10px "DejaVu Serif", serif; fill: #0000d0; letter-spacing: 0; }
.dg-it { font: 700 13px "DejaVu Sans", sans-serif; fill: #0000c0; text-anchor: middle; }
.wire { fill: none; stroke: #b070b0; stroke-width: 3; stroke-dasharray: 2 2; }
.wire2 { fill: none; stroke: #800080; stroke-width: 1; }
.boolw { fill: none; stroke: #006a00; stroke-dasharray: 1 1; shape-rendering: crispEdges; }

/* scrollbars */
.vscroll { display: flex; flex-direction: column; align-items: center; background: #f0f0f0; }
.vs-bd { width: 16px; height: 438px; padding-top: 5px; }
.vs-fp { width: 17px; height: 155px; padding-top: 4px; background: #f4f4f4; }
.sb-up, .sb-down { width: 0; height: 0; flex: none; border: 4px solid transparent; }
.sb-up { border-bottom: 4px solid #555; border-top: 0; }
.sb-down { border-top: 4px solid #555; border-bottom: 0; }
.vthumb {
  width: 15px; border: 1px solid #b0b0b0; border-radius: 2px; flex: none;
  background: linear-gradient(90deg, #f4f4f4, #dcdcdc 50%, #c8c8c8);
  display: flex; align-items: center; justify-content: center;
}
.vt-bd { height: 288px; margin: 56px 0 67px; }
.vt-fp { height: 88px; margin: 24px 0 20px; }
.ridges { width: 7px; height: 7px; background: repeating-linear-gradient(#666 0 1px, transparent 1px 3px); }
.bdfoot { height: 16px; flex: none; display: flex; background: #f0f0f0; }
.pathlabel {
  height: 17px; flex: none; white-space: nowrap; overflow: hidden; background: #fff;
  border-top: 1px solid #000; padding-left: 3px; line-height: 15px; color: #000;
}
.pl-bd { width: 200px; }
.pl-fp { width: 199px; border: 1px solid #000; padding-left: 2px; height: 17px; }
.hscroll { flex: 1; display: flex; align-items: center; padding-left: 4px; height: 16px; }
.sb-left, .sb-right { width: 0; height: 0; flex: none; border: 4px solid transparent; }
.sb-left { border-right: 4px solid #555; border-left: 0; }
.sb-right { border-left: 4px solid #555; border-right: 0; }
.hthumb {
  width: 274px; height: 15px; margin: 0 62px 0 71px; flex: none; border: 1px solid #a8a8a8; border-radius: 2px;
  background: linear-gradient(#f4f4f4, #dcdcdc 50%, #c4c4c4);
  display: flex; align-items: center; justify-content: center;
}
.hridges { width: 7px; height: 7px; background: repeating-linear-gradient(90deg, #666 0 1px, transparent 1px 3px); }
.sizegrip { width: 16px; flex: none; background: radial-gradient(#999 0 1px, transparent 1.2px) 0 0 / 4px 4px; clip-path: polygon(100% 0, 100% 100%, 0 100%); }

/* front panel */
.fphead { display: grid; grid-template-columns: 1fr 69px; flex: none; height: 46px; border-bottom: 1px solid #000; }
.fpbars { min-width: 0; overflow: hidden; }
.fp-tools { height: 24px; border-top: 1px solid #dcdcdc; padding-left: 50px; gap: 4px; }
.btn-cut { width: 8px; border-right: 0; margin-right: 0; }
.fpicons { display: flex; gap: 1px; background: #fff; align-items: center; padding: 5px 2px 0 1px; align-self: stretch; }
.fpbody { flex: 1; min-height: 0; display: flex; background: #fff; }
.fpanel {
  width: 203px; flex: none; height: 155px; padding: 12px 0 0 3px; display: flex; align-items: flex-start; gap: 14px;
  background-color: #e3e3e3;
  background-image: linear-gradient(#cfcfcf 1px, transparent 1px), linear-gradient(90deg, #cfcfcf 1px, transparent 1px);
  background-size: 12px 12px; background-position: 3px 3px;
}
.decor {
  width: 106px; height: 130px; flex: none; border: 1px solid #666; outline: 1px solid #a8a8a8; outline-offset: -2px;
  padding: 0 0 0 12px; font-size: 15.500px; color: #14141e; letter-spacing: -.15px;
}
.nlabel { height: 22px; line-height: 18px; }
.nl2 { margin-top: 9px; height: 23px; line-height: 20px; }
.ind {
  width: 82px; height: 31px; background: #cfcfcf; line-height: 23px;
  border: 4px solid; border-color: #a4a4a4 #efefef #efefef #a4a4a4; padding-left: 2px;
}
.ind2 { height: 32px; line-height: 24px; }
.stopbtn {
  width: 72px; height: 24px; margin-top: 95px; border: 1px solid #3c3c3c; flex: none;
  background: linear-gradient(#e6e6e6, #bdbdbd 45%, #9c9c9c); box-shadow: inset 0 0 0 1px #d0d0d0;
  color: #f00; text-align: center; line-height: 22px;
}
.fpfoot { height: 18px; flex: none; display: flex; background: #f4f4f4; padding-top: 1px; }
.fpfoot .sizegrip { margin-left: auto; }
```
